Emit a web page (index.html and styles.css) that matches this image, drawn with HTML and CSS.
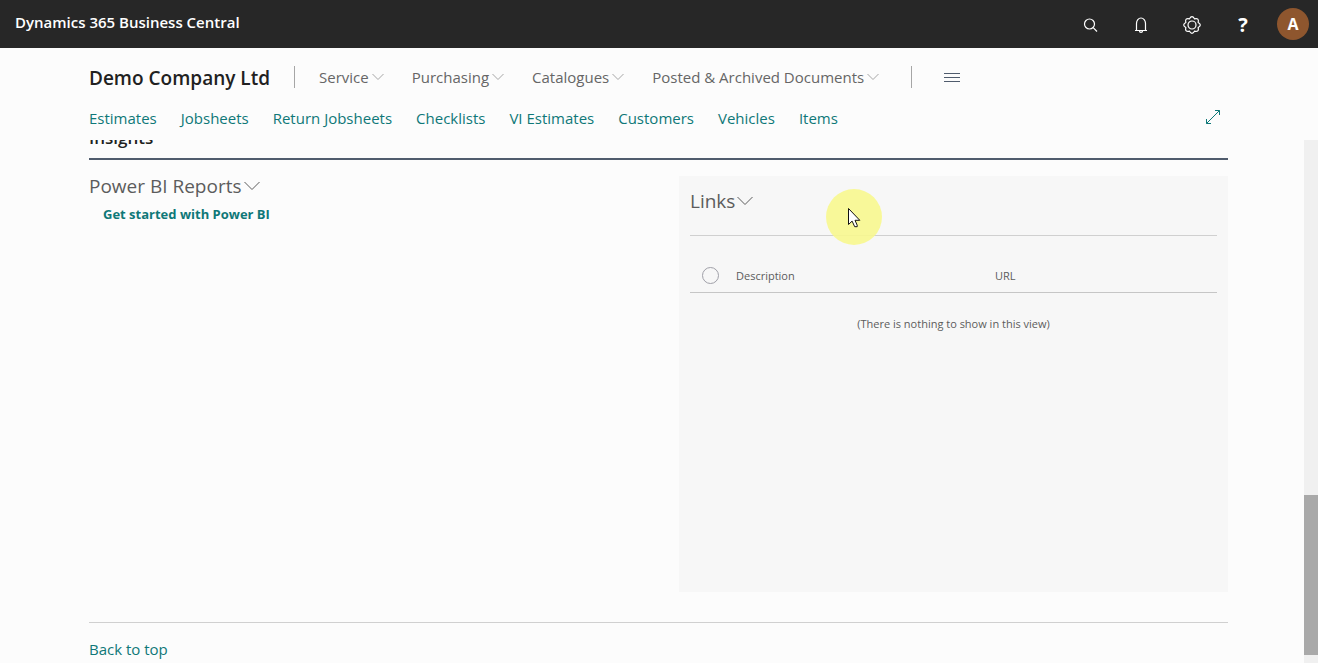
FILE: index.html
```html
<!DOCTYPE html>
<html lang="en">
<head>
<meta charset="utf-8">
<title>Dynamics 365 Business Central</title>
<link rel="stylesheet" href="styles.css">
</head>
<body>
<header class="topbar">
  <span class="product">Dynamics 365 Business Central</span>
  <div class="tools">
    <button class="tool" aria-label="Search"><svg width="20" height="20" viewBox="0 0 20 20"><circle cx="9.500" cy="9" r="5"/><path d="M13.200 12.700 17 16.500"/></svg></button>
    <button class="tool" aria-label="Notifications"><svg width="20" height="20" viewBox="0 0 20 20"><path d="M4 15.500h12M5.500 15V8.500a4.500 5.500 0 0 1 9 0V15M8.500 16a1.500 1.300 0 0 0 3 0"/></svg></button>
    <button class="tool" aria-label="Settings"><svg width="20" height="20" viewBox="0 0 20 20"><circle cx="10" cy="10" r="4"/><path d="M7.500 3.800Q10-.4 12.500 3.800Q17.300 2.700 16.200 7.500Q20.400 10 16.200 12.500Q17.300 17.300 12.500 16.200Q10 20.400 7.500 16.200Q2.700 17.300 3.800 12.500Q-.4 10 3.800 7.500Q2.700 2.700 7.500 3.800Z"/></svg></button>
    <button class="tool help" aria-label="Help">?</button>
    <button class="avatar" aria-label="Account">A</button>
  </div>
</header>
<div class="navigation">
  <nav class="menu">
    <a class="company" href="#">Demo Company Ltd</a>
    <div class="menu-items">
      <button class="menu-item">Service<svg width="12" height="8" viewBox="0 0 12 8"><path d="m.5 1 5.500 5.500 5.500-5.500"/></svg></button>
      <button class="menu-item">Purchasing<svg width="12" height="8" viewBox="0 0 12 8"><path d="m.5 1 5.500 5.500 5.500-5.500"/></svg></button>
      <button class="menu-item">Catalogues<svg width="12" height="8" viewBox="0 0 12 8"><path d="m.5 1 5.500 5.500 5.500-5.500"/></svg></button>
      <button class="menu-item">Posted &amp; Archived Documents<svg width="12" height="8" viewBox="0 0 12 8"><path d="m.5 1 5.500 5.500 5.500-5.500"/></svg></button>
    </div>
    <button class="more" aria-label="More"><svg width="16" height="10" viewBox="0 0 16 10"><path d="M0 1.500h16M0 5.500h16M0 9.500h16"/></svg></button>
  </nav>
  <nav class="links">
    <a href="#">Estimates</a>
    <a href="#">Jobsheets</a>
    <a href="#">Return Jobsheets</a>
    <a href="#">Checklists</a>
    <a href="#">VI Estimates</a>
    <a href="#">Customers</a>
    <a href="#">Vehicles</a>
    <a href="#">Items</a>
    <button class="expand" aria-label="Expand"><svg width="16" height="16" viewBox="0 0 16 16"><path d="M1.500 13.500l13-13M10 .5h4.500V5M1.500 9v4.500H6"/></svg></button>
  </nav>
</div>
<div class="viewport">
  <main class="content">
    <h2 class="section-title">Insights</h2>
    <div class="columns">
      <section>
        <h3 class="part-title">Power BI Reports<svg width="16" height="10" viewBox="0 0 16 10"><path d="m.5 1 7.500 7.500L15.500 1"/></svg></h3>
        <a class="start" href="#">Get started with Power BI</a>
      </section>
      <section class="panel">
        <h3 class="part-title">Links<svg width="16" height="10" viewBox="0 0 16 10"><path d="m.5 1 7.500 7.500L15.500 1"/></svg></h3>
        <table class="records">
          <thead>
            <tr><th class="pick"><input type="radio" aria-label="Select row"></th><th class="description">Description</th><th>URL</th></tr>
          </thead>
          <tbody>
            <tr><td colspan="3">(There is nothing to show in this view)</td></tr>
          </tbody>
        </table>
        <div class="pointer"><svg width="14" height="22" viewBox="0 0 14 22"><path d="M1.500 1.500v16l3.600-3.400 2.600 5.600h2.500v-1.500L8 13.300h4.800Z"/></svg></div>
      </section>
    </div>
    <footer class="footer"><a href="#">Back to top</a></footer>
  </main>
  <div class="scrollbar"><div class="thumb"></div></div>
</div>
</body>
</html>
```
FILE: styles.css
```css
* { box-sizing: border-box; }
body {
  margin: 0;
  height: 100vh;
  display: flex;
  flex-direction: column;
  overflow: hidden;
  background: #fcfcfc;
  color: #505c6d;
  font: 15px/20px "Open Sans", "Noto Sans", sans-serif;
  white-space: nowrap;
}
button { border: 0; padding: 0; background: none; color: inherit; font: inherit; }
a { color: #0f7878; text-decoration: none; }
h2, h3 { margin: 0; }
svg { display: block; fill: none; stroke: currentColor; flex: none; }

.topbar {
  flex: none;
  height: 48px;
  padding: 0 9px 0 15px;
  display: flex;
  align-items: center;
  justify-content: space-between;
  background: #272727;
  color: #fff;
}
.product { font-size: 15px; font-weight: 600; padding-bottom: 4px; }
.tools { display: flex; align-items: center; gap: 31px; }
.tool { width: 20px; height: 22px; padding-top: 2px; }
.tool svg { stroke-width: 1.2; }
.help { font-size: 20px; font-weight: 700; line-height: 20px; }
.avatar {
  width: 32px;
  height: 32px;
  margin-left: -7px;
  border-radius: 50%;
  background: #8e562e;
  font-size: 16px;
  font-weight: 700;
}

.navigation { flex: none; height: 92px; padding: 16px 90px 0 89px; }
.menu { display: flex; align-items: center; height: 26px; }
.company { padding-top: 2px; color: #212121; font-size: 19px; font-weight: 600; line-height: 28px; }
.menu-items {
  display: flex;
  gap: 28px;
  height: 22px;
  margin-left: 24px;
  padding: 0 32px 0 24px;
  border-left: 1px solid #a6a6a6;
  border-right: 1px solid #a6a6a6;
}
.menu-item { display: flex; align-items: center; gap: 3px; color: #666; }
.menu-item svg { color: #a6a6a6; }
.more { margin-left: 32px; }
.links { display: flex; align-items: center; gap: 24px; margin-top: 18px; height: 20px; }
.expand { margin-left: auto; margin-right: 7px; color: #0f7878; }

.viewport { flex: 1; min-height: 0; display: flex; overflow: hidden; }
.content {
  flex: 1;
  min-width: 0;
  padding: 0 76px 0 89px;
  display: flex;
  flex-direction: column;
  justify-content: flex-end;
}
.section-title {
  padding-bottom: 8px;
  border-bottom: 2px solid #505c6d;
  color: #212121;
  font-size: 17px;
  font-weight: 600;
  line-height: 24px;
}
.columns {
  display: grid;
  grid-template-columns: 1fr 1fr;
  gap: 41px;
  padding: 16px 0 30px;
  border-bottom: 1px solid #d0d0d0;
}
.part-title {
  display: flex;
  align-items: center;
  gap: 2px;
  color: #5c5c5c;
  font-size: 19px;
  font-weight: 400;
  line-height: 20px;
}
.start { display: block; padding: 8px 14px; font-size: 13px; font-weight: 700; }
.panel {
  position: relative;
  min-height: 416px;
  padding: 15px 11px;
  background: #f7f7f7;
}
.records {
  width: 100%;
  margin-top: 24px;
  border-collapse: collapse;
  border-top: 1px solid #d0d0d0;
  color: #5c5c5c;
  font-size: 11px;
  line-height: 16px;
}
.records th {
  height: 57px;
  padding: 24px 0 0;
  border-bottom: 1px solid #c6c6c6;
  font-weight: 400;
  text-align: left;
}
.records td { padding: 23px 0; text-align: center; }
.records .pick { width: 46px; padding: 22px 0 0 12px; }
.description { width: 259px; }
.pick input {
  appearance: none;
  display: block;
  width: 17px;
  height: 17px;
  margin: 0;
  border: 1px solid #a0a0a8;
  border-radius: 50%;
}
.pointer {
  position: absolute;
  left: 147px;
  top: 13px;
  width: 56px;
  height: 56px;
  padding: 18px 21px;
  border-radius: 50%;
  background: rgba(248, 248, 140, 0.88);
}
.pointer svg { fill: #fff; color: #111; }
.footer { padding: 16px 0 4px; }

.scrollbar { width: 14px; padding-bottom: 8px; background: #f0f0f0; display: flex; align-items: flex-end; }
.thumb { width: 100%; height: 31%; background: #a9a9a9; }
```
